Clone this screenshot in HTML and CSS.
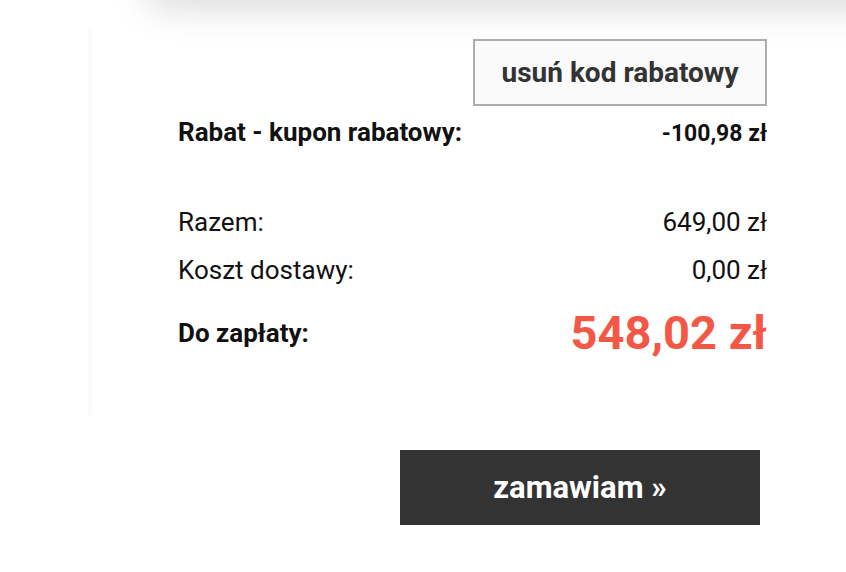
FILE: index.html
```html
<!DOCTYPE html>
<html lang="pl">
<head>
<meta charset="utf-8">
<link rel="stylesheet" href="styles.css">
</head>
<body>
<div class="top-card"></div>
<div class="summary">
  <div class="coupon-actions">
    <button class="remove-btn" type="button">usuń kod rabatowy</button>
  </div>
  <div class="row row-discount">
    <span class="label">Rabat - kupon rabatowy:</span>
    <span class="value">-100,98 zł</span>
  </div>
  <div class="row row-sum">
    <span class="label">Razem:</span>
    <span class="value">649,00 zł</span>
  </div>
  <div class="row row-ship">
    <span class="label">Koszt dostawy:</span>
    <span class="value">0,00 zł</span>
  </div>
  <div class="row row-total">
    <span class="label">Do zapłaty:</span>
    <span class="value">548,02 zł</span>
  </div>
</div>
<div class="order-wrap">
  <button class="order-btn" type="button">zamawiam »</button>
</div>
</body>
</html>
```
FILE: styles.css
```css
* { box-sizing: border-box; }
html, body { margin: 0; padding: 0; background: #fff; }
body {
  font-family: Roboto, "Liberation Sans", Arial, sans-serif;
  color: #111;
  width: 846px;
  height: 572px;
  overflow: hidden;
}
.top-card {
  height: 40px;
  margin: -44px -60px 0 145px;
  background: #fff;
  border-radius: 40px;
  box-shadow: 0 12px 36px rgba(0, 0, 0, 0.15);
}
.summary {
  margin: 34px 0 0 88px;
  width: 679px;
  height: 385px;
  border-left: 4px solid #fafafa;
  padding: 9px 0 0 86px;
  display: flex;
  flex-direction: column;
}
.coupon-actions {
  display: flex;
  justify-content: flex-end;
}
.remove-btn {
  width: 294px;
  height: 67px;
  border: 2px solid #acacac;
  background: #fafafa;
  color: #333;
  font-family: inherit;
  font-weight: 700;
  font-size: 28px;
  padding: 0;
  cursor: pointer;
}
.row {
  display: flex;
  justify-content: space-between;
  align-items: baseline;
  line-height: 30px;
}
.row-discount { margin-top: 11px; }
.row-discount .label { font-weight: 700; font-size: 26px; }
.row-discount .value { font-weight: 700; font-size: 23px; }
.row-sum { margin-top: 58px; font-size: 26px; }
.row-ship { margin-top: 18px; font-size: 26px; }
.row-total { margin-top: 23px; align-items: center; }
.row-total .label { font-weight: 700; font-size: 26px; }
.row-total .value { font-weight: 700; font-size: 47px; line-height: 50px; color: #f25845; }
.order-wrap {
  display: flex;
  justify-content: flex-end;
  padding-right: 86px;
  margin-top: 35px;
}
.order-btn {
  width: 360px;
  height: 75px;
  border: 0;
  background: #333;
  color: #fff;
  font-family: inherit;
  font-weight: 700;
  font-size: 31px;
  padding: 0;
  cursor: pointer;
}
```
